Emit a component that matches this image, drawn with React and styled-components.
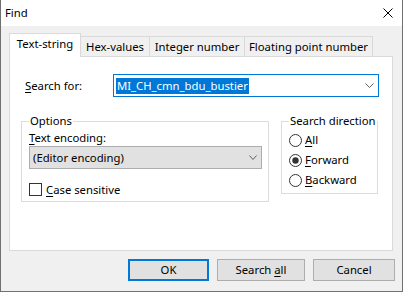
import React from "react";
import styled, { createGlobalStyle } from "styled-components";

const FONT = `"Noto Sans", "Segoe UI", sans-serif`;
const FS = "11.3px";

const Global = createGlobalStyle`
  html, body { margin: 0; padding: 0; background: #fff; }
  body { font-family: ${FONT}; font-size: ${FS}; color: #000; }
  * { box-sizing: border-box; }
`;

const Window = styled.div`
  width: 403px;
  height: 292px;
  display: flex;
  flex-direction: column;
  border: 1px solid #707070;
  border-top: none;
  background: #f0f0f0;
`;

const TitleBar = styled.div`
  height: 26px;
  background: #fff;
  display: flex;
  align-items: center;
  justify-content: space-between;
  padding: 0 9px 0 4px;
  line-height: 16px;
`;

const Body = styled.div`
  flex: 1;
  display: flex;
  flex-direction: column;
  padding: 7px 9px 0 8px;
`;

const TabStrip = styled.div`
  display: flex;
  align-items: flex-end;
  height: 23px;
`;

const Tab = styled.div`
  position: relative;
  width: ${(p) => p.$w}px;
  height: ${(p) => (p.$active ? 24 : 20)}px;
  margin-bottom: ${(p) => (p.$active ? -1 : 0)}px;
  margin-left: ${(p) => (p.$first ? 0 : -1)}px;
  z-index: ${(p) => (p.$active ? 2 : 1)};
  background: ${(p) => (p.$active ? "#fff" : "#f0f0f0")};
  border: 1px solid #d9d9d9;
  border-bottom: none;
  display: flex;
  align-items: center;
  justify-content: center;
  padding-bottom: ${(p) => (p.$active ? 3 : 0)}px;
  white-space: nowrap;
  line-height: 16px;
`;

const Panel = styled.div`
  height: 195px;
  background: #fff;
  border: 1px solid #d9d9d9;
  padding: 17px 0 0 11px;
`;

const SearchRow = styled.div`
  display: grid;
  grid-template-columns: 92px 266px;
  align-items: center;
`;

const Label = styled.span`
  padding-left: ${(p) => p.$indent || 0}px;
  line-height: 16px;
  white-space: nowrap;
`;

const U = styled.span`
  text-decoration: underline;
  text-underline-offset: 2px;
`;

const Combo = styled.div`
  height: 23px;
  border: 1px solid #0078d7;
  background: #fff;
  display: flex;
  align-items: center;
  justify-content: space-between;
  padding: 0 4px 0 2px;
`;

const Selection = styled.span`
  background: #0078d7;
  color: #fff;
  line-height: 16px;
  padding: 0 1px;
  white-space: nowrap;
`;

const GroupsRow = styled.div`
  display: flex;
  gap: 12px;
  margin-top: 16px;
  align-items: flex-start;
`;

const Group = styled.fieldset`
  margin: 0;
  min-width: 0;
  width: ${(p) => p.$w}px;
  border: 1px solid #dcdcdc;
  padding: ${(p) => p.$pt || 0}px 6px ${(p) => p.$pb}px 7px;
  display: flex;
  flex-direction: column;
`;

const Legend = styled.legend`
  padding: 0 1px;
  line-height: 16px;
  white-space: nowrap;
`;

const FieldLabel = styled.div`
  line-height: 17px;
  height: 17px;
  white-space: nowrap;
`;

const Select = styled.div`
  height: 23px;
  border: 1px solid #adadad;
  background: #e1e1e1;
  display: flex;
  align-items: center;
  justify-content: space-between;
  padding: 0 4px 0 3px;
  line-height: 16px;
`;

const CheckRow = styled.label`
  display: flex;
  align-items: center;
  gap: 4px;
  height: 13px;
  margin-top: 14px;
  line-height: 16px;
`;

const CheckBox = styled.span`
  width: 13px;
  height: 13px;
  border: 1px solid #333;
  background: #fff;
  flex: none;
`;

const RadioRow = styled.label`
  display: flex;
  align-items: center;
  gap: 3px;
  height: 20px;
  line-height: 16px;
`;

const ButtonRow = styled.div`
  display: flex;
  justify-content: flex-end;
  gap: 8px;
  margin-top: 8px;
  margin-right: -2px;
`;

const Button = styled.button`
  width: ${(p) => p.$w}px;
  height: 22px;
  font-family: ${FONT};
  font-size: ${FS};
  color: #000;
  background: #e1e1e1;
  border: ${(p) => (p.$default ? "2px solid #0078d7" : "1px solid #adadad")};
  padding: 0;
  line-height: 16px;
`;

const Chevron = ({ w = 9 }) => (
  <svg width={w} height="5" viewBox={`0 0 ${w} 5`}>
    <polyline
      points={`0.5,0.5 ${w / 2},4.5 ${w - 0.5},0.5`}
      fill="none"
      stroke="#606060"
      strokeWidth="1"
    />
  </svg>
);

const Radio = ({ checked }) => (
  <svg width="13" height="13" viewBox="0 0 13 13" style={{ flex: "none" }}>
    <circle cx="6.5" cy="6.5" r="6" fill="#fff" stroke="#333" strokeWidth="1" />
    {checked && <circle cx="6.5" cy="6.5" r="3.2" fill="#333" />}
  </svg>
);

const CloseIcon = () => (
  <svg width="10" height="10" viewBox="0 0 10 10">
    <path d="M0.5 0.5 L9.5 9.5 M9.5 0.5 L0.5 9.5" stroke="#000" strokeWidth="1" />
  </svg>
);

export default function App() {
  return (
    <>
      <Global />
      <Window>
        <TitleBar>
          <span>Find</span>
          <CloseIcon />
        </TitleBar>
        <Body>
          <TabStrip>
            <Tab $first $active $w={72}>Text-string</Tab>
            <Tab $w={70}>Hex-values</Tab>
            <Tab $w={96}>Integer number</Tab>
            <Tab $w={129}>Floating point number</Tab>
          </TabStrip>
          <Panel>
            <SearchRow>
              <Label $indent={4}>
                <U>S</U>earch for:
              </Label>
              <Combo>
                <Selection>MI_CH_cmn_bdu_bustier</Selection>
                <Chevron w={9} />
              </Combo>
            </SearchRow>
            <GroupsRow>
              <Group $w={248} $pb={5}>
                <Legend>Options</Legend>
                <FieldLabel>
                  <U>T</U>ext encoding:
                </FieldLabel>
                <Select>
                  <span>(Editor encoding)</span>
                  <Chevron w={8} />
                </Select>
                <CheckRow>
                  <CheckBox />
                  <span>
                    <U>C</U>ase sensitive
                  </span>
                </CheckRow>
              </Group>
              <Group $w={97} $pt={1} $pb={3}>
                <Legend>Search direction</Legend>
                <RadioRow>
                  <Radio />
                  <span>
                    <U>A</U>ll
                  </span>
                </RadioRow>
                <RadioRow>
                  <Radio checked />
                  <span>
                    <U>F</U>orward
                  </span>
                </RadioRow>
                <RadioRow>
                  <Radio />
                  <span>
                    <U>B</U>ackward
                  </span>
                </RadioRow>
              </Group>
            </GroupsRow>
          </Panel>
          <ButtonRow>
            <Button $default $w={81}>OK</Button>
            <Button $w={88}>
              Search <U>a</U>ll
            </Button>
            <Button $w={82}>Cancel</Button>
          </ButtonRow>
        </Body>
      </Window>
    </>
  );
}
